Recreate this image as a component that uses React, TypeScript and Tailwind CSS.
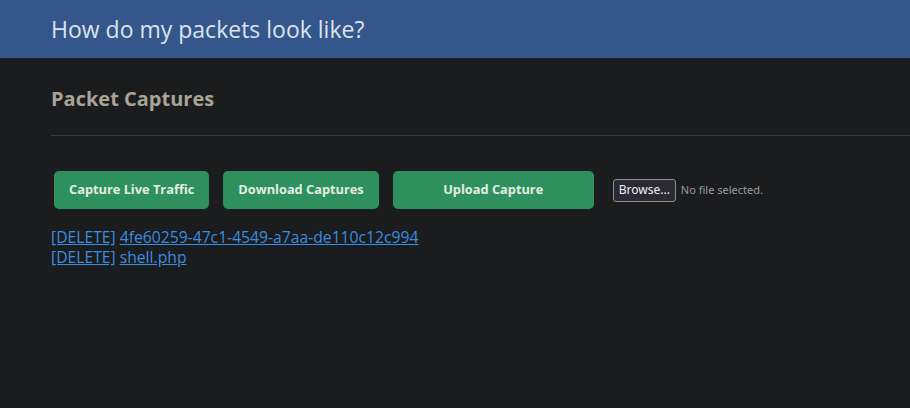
import { useState } from 'react';

const links = ['4fe60259-47c1-4549-a7aa-de110c12c994', 'shell.php'];

export default function App() {
  const [files] = useState(links);

  return (
    <div className="min-h-[408px] w-full bg-[#1b1c1e] font-['Open_Sans',sans-serif] overflow-hidden">
      {/* Header */}
      <div className="h-[58px] bg-[#34568a] flex items-center pl-[51px]">
        <h1 className="text-[23px] text-[#dbe3ee] font-normal">How do my packets look like?</h1>
      </div>

      <div className="pl-[51px]">
        <h2 className="pt-[26px] text-[20px] font-bold text-[#a9a398] leading-[30px]">Packet Captures</h2>
        <hr className="mt-[21px] border-t border-[#3a3b3d]" />

        <div className="flex items-center mt-[35px] ml-[3px]">
          <button className="h-[38px] px-[15px] rounded-[5px] bg-[#2e915d] text-[#e3ece6] text-[12.8px] font-bold">
            Capture Live Traffic
          </button>
          <button className="ml-[14px] h-[38px] px-[15px] rounded-[5px] bg-[#2e915d] text-[#e3ece6] text-[12.8px] font-bold">
            Download Captures
          </button>
          <button className="ml-[14px] h-[38px] w-[201px] rounded-[5px] bg-[#2e915d] text-[#e3ece6] text-[12.8px] font-bold">
            Upload Capture
          </button>
          <div className="ml-[19px] flex items-center gap-[5px] text-[11px] font-['Noto_Sans',sans-serif]">
            <span className="px-[5px] h-[23px] flex items-center rounded-[3px] border border-[#8d8d93] bg-[#2b2a33] text-[#f0f0f4] text-[12px]">
              Browse...
            </span>
            <span className="text-[#9a9a9e]">No file selected.</span>
          </div>
        </div>

        <div className="mt-[18px] text-[15.7px] leading-[20px] text-[#3a8de0]">
          {files.map(f => (
            <div key={f}>
              <a href="#" className="underline">[DELETE]</a>{' '}
              <a href="#" className="underline">{f}</a>
            </div>
          ))}
        </div>
      </div>
    </div>
  );
}
